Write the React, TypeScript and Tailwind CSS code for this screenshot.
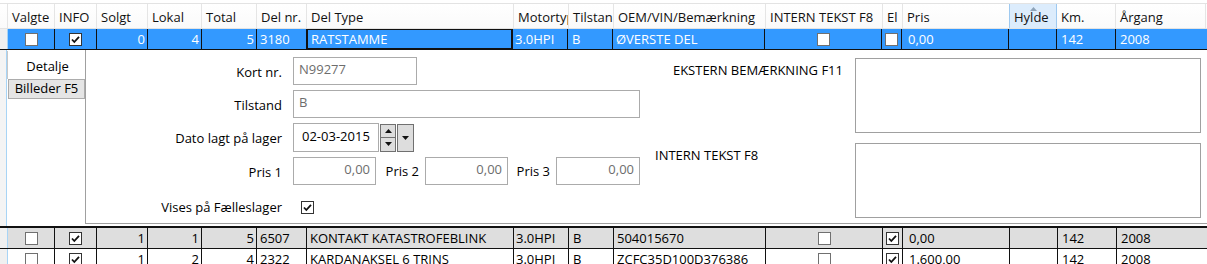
import React from "react";

// column widths (incl. 1px right border)
const W = {
  valgte: "w-[47px]",
  info: "w-[42px]",
  solgt: "w-[51px]",
  lokal: "w-[54px]",
  total: "w-[55px]",
  delnr: "w-[50px]",
  deltype: "w-[207px]",
  motor: "w-[55px]",
  tilstand: "w-[45px]",
  oem: "w-[152px]",
  intern: "w-[117px]",
  el: "w-[20px]",
  pris: "w-[107px]",
  hylde: "w-[48px]",
  km: "w-[59px]",
  aargang: "w-[90px]",
};

function CheckBox({ checked }: { checked?: boolean }) {
  return (
    <span
      className={`inline-flex h-[13px] w-[13px] shrink-0 items-center justify-center bg-white border ${
        checked ? "border-[#333333]" : "border-[#707070]"
      }`}
    >
      {checked && (
        <svg viewBox="0 0 11 11" className="h-[11px] w-[11px]">
          <path d="M2 5.5 L4.3 8 L9 2.8" fill="none" stroke="#111" strokeWidth="1.8" />
        </svg>
      )}
    </span>
  );
}

interface RowData {
  solgt: string;
  lokal: string;
  total: string;
  delnr: string;
  deltype: string;
  motor: string;
  tilstand: string;
  oem: string;
  el: boolean;
  pris: string;
  km: string;
  aargang: string;
}

function HeaderCell({ w, label, active }: { w: string; label: string; active?: boolean }) {
  return (
    <div
      className={`${w} shrink-0 h-full flex items-center pl-[4px] pt-[3px] whitespace-nowrap overflow-hidden border-r ${
        active ? "bg-[#dcecfc] border-[#9ec9f0] border-l relative -ml-px" : "border-[#e5e5e5]"
      }`}
    >
      {active && (
        <svg viewBox="0 0 7 4" className="absolute left-[20px] top-[3px] h-[4px] w-[7px]">
          <path d="M0 4 L3.5 0 L7 4 Z" fill="#8ea3b8" />
        </svg>
      )}
      {label}
    </div>
  );
}

function DataRow({ d, selected, bg }: { d: RowData; selected?: boolean; bg: string }) {
  const line = "border-r border-[#111]";
  const base = `shrink-0 h-full flex items-center whitespace-nowrap overflow-hidden ${line}`;
  return (
    <div className={`flex h-[21px] border-b border-[#111] ${bg} ${selected ? "text-white" : "text-black"}`}>
      <div className="w-[8px] shrink-0 bg-[#f0f0f0] border-r border-[#a8d4f5]" />
      <div className={`${W.valgte} ${base} justify-center`}>
        <CheckBox />
      </div>
      <div className={`${W.info} ${base} justify-center`}>
        <CheckBox checked />
      </div>
      <div className={`${W.solgt} ${base} justify-end pr-[2px]`}>{d.solgt}</div>
      <div className={`${W.lokal} ${base} justify-end pr-[2px]`}>{d.lokal}</div>
      <div className={`${W.total} ${base} justify-end pr-[2px]`}>{d.total}</div>
      <div className={`${W.delnr} ${base} pl-[3px]`}>{d.delnr}</div>
      <div
        className={`${W.deltype} ${base} pl-[3px] ${
          selected ? "border-l-2 border-y border-r-2 border-[#111] -ml-px" : ""
        }`}
      >
        {d.deltype}
      </div>
      <div className={`${W.motor} ${base} pl-[2px]`}>{d.motor}</div>
      <div className={`${W.tilstand} ${base} pl-[4px]`}>{d.tilstand}</div>
      <div className={`${W.oem} ${base} pl-[3px]`}>{d.oem}</div>
      <div className={`${W.intern} ${base} justify-center`}>
        <CheckBox />
      </div>
      <div className={`${W.el} ${base} pl-[3px]`}>
        <CheckBox checked={d.el} />
      </div>
      <div className={`${W.pris} ${base} pl-[6px]`}>{d.pris}</div>
      <div className={`${W.hylde} ${base}`} />
      <div className={`${W.km} ${base} pl-[4px]`}>{d.km}</div>
      <div className={`${W.aargang} shrink-0 h-full flex items-center pl-[4px]`}>{d.aargang}</div>
    </div>
  );
}

function Field({ w, value, right, dark }: { w: string; value: string; right?: boolean; dark?: boolean }) {
  return (
    <div
      className={`${w} h-[28px] shrink-0 bg-white border border-[#ababab] flex items-center px-[5px] pb-[4px] ${
        right ? "justify-end" : ""
      } ${dark ? "text-black" : "text-[#6d6d6d]"}`}
    >
      {value}
    </div>
  );
}

function Arrow({ up }: { up?: boolean }) {
  return (
    <svg viewBox="0 0 7 4" className="h-[4px] w-[7px]">
      <path d={up ? "M0 4 L3.5 0 L7 4 Z" : "M0 0 L7 0 L3.5 4 Z"} fill="#111" />
    </svg>
  );
}

function DetailPanel() {
  return (
    <div className="flex h-[176px]">
      <div className="w-[7px] shrink-0 bg-[#f4f4f4] border-r border-[#a8d4f5]" />
      {/* tabs */}
      <div className="w-[78px] shrink-0 flex flex-col">
        <div className="h-[28px] mt-[1px] border-l border-[#c8c8c8] flex items-center justify-center pl-[2px] pt-[2px]">
          Detalje
        </div>
        <div className="h-[20px] ml-[1px] bg-[#e5e5e5] border border-[#acacac] flex items-center justify-center pb-[1px]">
          Billeder F5
        </div>
      </div>
      {/* content */}
      <div className="flex-1 flex flex-col">
        <div className="h-[27px]" />
        <div className="flex-1 flex border-l border-b border-[#a0a0a0] mb-[2px] -mt-[27px] pt-[27px] [border-top:0]">
          <div className="w-[555px] shrink-0 flex flex-col gap-[5px] -mt-[20px]">
            <div className="flex items-center">
              <div className="w-[197px] text-right pr-[1px] pt-[2px]">Kort nr.</div>
              <div className="w-[10px]" />
              <Field w="w-[124px]" value="N99277" />
            </div>
            <div className="flex items-center">
              <div className="w-[197px] text-right pr-[1px] pt-[2px]">Tilstand</div>
              <div className="w-[10px]" />
              <Field w="w-[347px]" value="B" />
            </div>
            <div className="flex items-center">
              <div className="w-[197px] text-right pr-[1px] pt-[2px]">Dato lagt på lager</div>
              <div className="w-[10px]" />
              <div className="h-[29px] w-[86px] bg-white border border-[#ababab] flex items-center pl-[8px] pb-[2px]">
                02-03-2015
              </div>
              <div className="flex flex-col ml-[1px] h-[28px]">
                <div className="h-[14px] w-[16px] bg-[#dddddd] border border-[#707070] flex items-center justify-center">
                  <Arrow up />
                </div>
                <div className="h-[14px] w-[16px] bg-[#dddddd] border border-[#707070] border-t-0 flex items-center justify-center">
                  <Arrow />
                </div>
              </div>
              <div className="h-[28px] w-[17px] ml-[1px] bg-[#dddddd] border border-[#707070] flex items-center justify-center">
                <Arrow />
              </div>
            </div>
            <div className="flex items-center">
              <div className="w-[197px] text-right pr-[1px] pt-[2px]">Pris 1</div>
              <div className="w-[10px]" />
              <Field w="w-[83px]" value="0,00" right />
              <div className="w-[49px] shrink-0 text-right pr-[6px]">Pris 2</div>
              <Field w="w-[83px]" value="0,00" right />
              <div className="w-[48px] shrink-0 text-right pr-[6px]">Pris 3</div>
              <Field w="w-[84px]" value="0,00" right />
            </div>
            <div className="flex items-center h-[22px] mt-[6px]">
              <div className="w-[197px] text-right pr-[1px]">Vises på Fælleslager</div>
              <div className="w-[18px]" />
              <CheckBox checked />
            </div>
          </div>
          <div className="flex-1 flex flex-col gap-[10px] -mt-[19px] pr-[6px]">
            <div className="flex">
              <div className="w-[214px] text-right pr-[12px] pt-[6px] whitespace-nowrap">EKSTERN BEMÆRKNING F11</div>
              <div className="flex-1 h-[75px] bg-white border border-[#a0a0a0]" />
            </div>
            <div className="flex">
              <div className="w-[214px] pl-[14px] pt-[6px]">INTERN TEKST F8</div>
              <div className="flex-1 h-[75px] bg-white border border-[#a0a0a0]" />
            </div>
          </div>
        </div>
      </div>
    </div>
  );
}

const selectedRow: RowData = {
  solgt: "0",
  lokal: "4",
  total: "5",
  delnr: "3180",
  deltype: "RATSTAMME",
  motor: "3.0HPI",
  tilstand: "B",
  oem: "ØVERSTE DEL",
  el: false,
  pris: "0,00",
  km: "142",
  aargang: "2008",
};

const rows: RowData[] = [
  {
    solgt: "1",
    lokal: "1",
    total: "5",
    delnr: "6507",
    deltype: "KONTAKT KATASTROFEBLINK",
    motor: "3.0HPI",
    tilstand: "B",
    oem: "504015670",
    el: true,
    pris: "0,00",
    km: "142",
    aargang: "2008",
  },
  {
    solgt: "1",
    lokal: "2",
    total: "4",
    delnr: "2322",
    deltype: "KARDANAKSEL 6 TRINS",
    motor: "3.0HPI",
    tilstand: "B",
    oem: "ZCFC35D100D376386",
    el: true,
    pris: "1.600,00",
    km: "142",
    aargang: "2008",
  },
];

export default function App() {
  return (
    <div className="w-[1207px] h-[264px] overflow-hidden bg-white text-[13px] leading-none text-black font-['Open_Sans',sans-serif]">
      <div className="pt-[3px]">
        <div className="flex h-[26px] border-t border-b border-[#e3e3e3] bg-gradient-to-b from-white to-[#fafafa] text-[#111]">
          <div className="w-[8px] shrink-0 border-r border-[#e5e5e5]" />
          <HeaderCell w={W.valgte} label="Valgte" />
          <HeaderCell w={W.info} label="INFO" />
          <HeaderCell w={W.solgt} label="Solgt" />
          <HeaderCell w={W.lokal} label="Lokal" />
          <HeaderCell w={W.total} label="Total" />
          <HeaderCell w={W.delnr} label="Del nr." />
          <HeaderCell w={W.deltype} label="Del Type" />
          <HeaderCell w={W.motor} label="Motortype" />
          <HeaderCell w={W.tilstand} label="Tilstand" />
          <HeaderCell w={W.oem} label="OEM/VIN/Bemærkning" />
          <HeaderCell w={W.intern} label="INTERN TEKST F8" />
          <HeaderCell w={W.el} label="El" />
          <HeaderCell w={W.pris} label="Pris" />
          <HeaderCell w={W.hylde} label="Hylde" active />
          <HeaderCell w={W.km} label="Km." />
          <HeaderCell w={W.aargang} label="Årgang" />
        </div>
      </div>
      <DataRow d={selectedRow} selected bg="bg-[#3399ff]" />
      <DetailPanel />
      <div className="h-[2px] bg-[#111]" />
      <DataRow d={rows[0]} bg="bg-[#dedede]" />
      <DataRow d={rows[1]} bg="bg-white" />
    </div>
  );
}
